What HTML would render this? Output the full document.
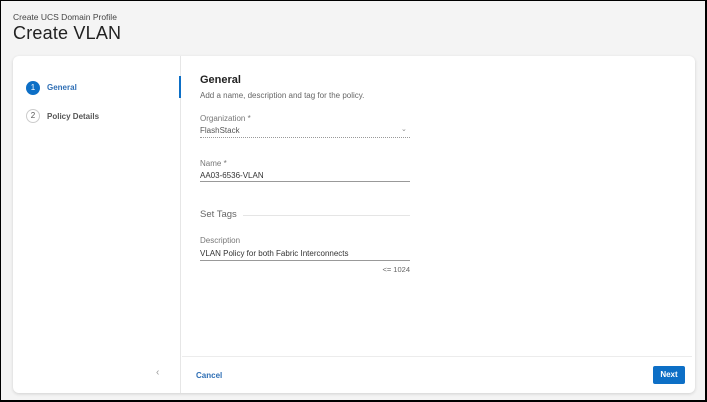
<!DOCTYPE html>
<html><head><style>
*{margin:0;padding:0;box-sizing:border-box}
body{width:707px;height:402px;overflow:hidden;background:#f4f4f4;font-family:"Liberation Sans",sans-serif;position:relative;border:1px solid #000;border-bottom-width:2px;border-right-width:2px}
.abs{position:absolute}
.card{left:12px;top:55px;width:682px;height:337px;background:#fff;border-radius:6px;box-shadow:0 1px 3px rgba(0,0,0,.15)}
.left{left:0;top:0;width:168px;height:337px;border-right:1px solid #e6e6e6}
.lbl{font-size:8px;color:#777}
.val{font-size:8px;color:#333}
</style></head><body>
<div class="abs" style="left:12px;top:11px;font-size:8.5px;color:#444">Create UCS Domain Profile</div>
<div class="abs" style="left:12px;top:22px;font-size:18px;color:#222;letter-spacing:.2px">Create VLAN</div>
<div class="abs card">
 <div class="abs left">
  <div class="abs" style="left:13px;top:25px;width:14px;height:14px;border-radius:50%;background:#0d6fc6;color:#fff;font-size:8px;text-align:center;line-height:14px">1</div>
  <div class="abs" style="left:34px;top:27px;font-size:8px;font-weight:bold;color:#2f6fb5">General</div>
  <div class="abs" style="left:13px;top:53px;width:14px;height:14px;border-radius:50%;border:1px solid #ccc;color:#555;font-size:8px;text-align:center;line-height:12px">2</div>
  <div class="abs" style="left:34px;top:56px;font-size:8px;font-weight:bold;color:#555">Policy Details</div>
  <div class="abs" style="left:143px;top:311px;font-size:10px;color:#999">‹</div>
 </div>
 <div class="abs" style="left:166px;top:20px;width:2px;height:22px;background:#0d6fc6"></div>
 <div class="abs" style="left:187px;top:18px;font-size:11px;font-weight:bold;color:#222">General</div>
 <div class="abs" style="left:187px;top:35px;font-size:8px;color:#666">Add a name, description and tag for the policy.</div>
 <div class="abs lbl" style="left:187px;top:58px">Organization *</div>
 <div class="abs val" style="left:187px;top:70px;color:#555">FlashStack</div>
 <div class="abs" style="left:388px;top:69px;font-size:7px;color:#888">⌄</div>
 <div class="abs" style="left:187px;top:81px;width:210px;border-top:1px dotted #999"></div>
 <div class="abs lbl" style="left:187px;top:103px">Name *</div>
 <div class="abs val" style="left:187px;top:115px">AA03-6536-VLAN</div>
 <div class="abs" style="left:187px;top:125px;width:210px;border-top:1px solid #999"></div>
 <div class="abs" style="left:187px;top:153px;font-size:9.5px;color:#666">Set Tags</div>
 <div class="abs" style="left:230px;top:159px;width:167px;border-top:1px solid #e5e5e5"></div>
 <div class="abs lbl" style="left:187px;top:180px">Description</div>
 <div class="abs val" style="left:187px;top:193px">VLAN Policy for both Fabric Interconnects</div>
 <div class="abs" style="left:187px;top:204px;width:210px;border-top:1px solid #999"></div>
 <div class="abs" style="left:357px;top:209px;width:40px;text-align:right;font-size:7.5px;color:#666">&lt;= 1024</div>
 <div class="abs" style="left:169px;top:300px;width:510px;border-top:1px solid #ececec"></div>
 <div class="abs" style="left:183px;top:315px;font-size:8px;font-weight:bold;color:#2f6fb5">Cancel</div>
 <div class="abs" style="left:640px;top:310px;width:32px;height:18px;background:#0d6fc6;border-radius:2px;color:#fff;font-size:8px;font-weight:bold;text-align:center;line-height:18px">Next</div>
</div>
</body></html>
